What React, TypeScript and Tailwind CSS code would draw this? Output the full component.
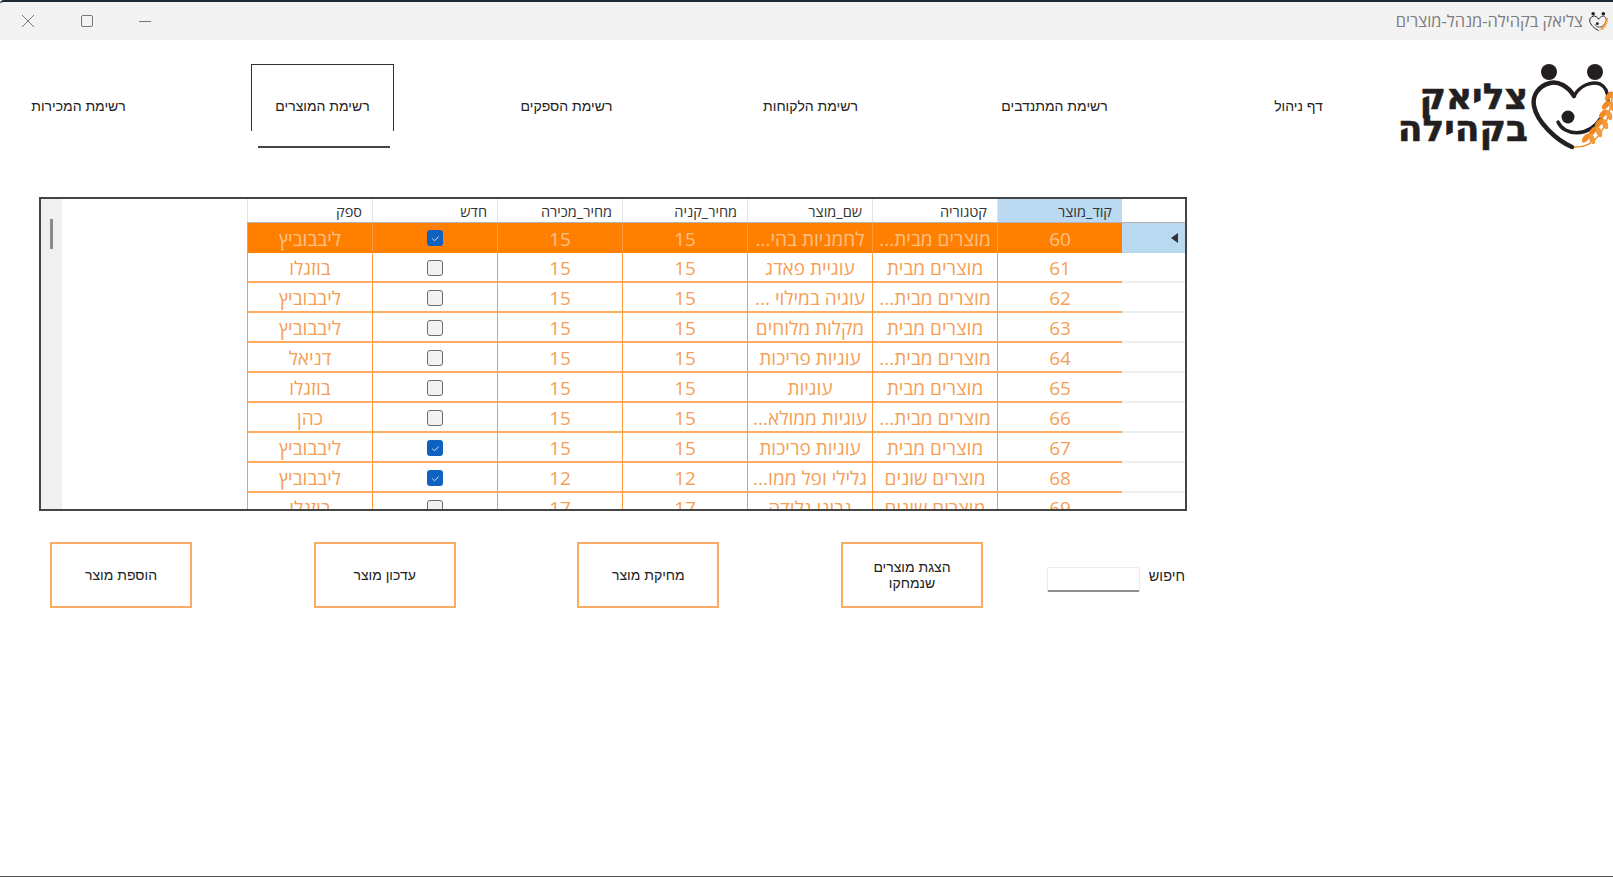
const navItems = ["רשימת המכירות", "רשימת המוצרים", "רשימת הספקים", "רשימת הלקוחות", "רשימת המתנדבים", "דף ניהול"];

const headers = ["קוד_מוצר", "קטגוריה", "שם_מוצר", "מחיר_קניה", "מחיר_מכירה", "חדש", "ספק"];

const rows = [
  { code: 60, cat: "מוצרים מבית...", name: "לחמניות בהי...", buy: 15, sell: 15, isNew: true, vendor: "ליבבוביץ" },
  { code: 61, cat: "מוצרים מבית", name: "עוגיית פאדג", buy: 15, sell: 15, isNew: false, vendor: "בוזגלו" },
  { code: 62, cat: "מוצרים מבית...", name: "עוגיה במילוי ...", buy: 15, sell: 15, isNew: false, vendor: "ליבבוביץ" },
  { code: 63, cat: "מוצרים מבית", name: "מקלות מלוחים", buy: 15, sell: 15, isNew: false, vendor: "ליבבוביץ" },
  { code: 64, cat: "מוצרים מבית...", name: "עוגיות פריכות", buy: 15, sell: 15, isNew: false, vendor: "דניאל" },
  { code: 65, cat: "מוצרים מבית", name: "עוגיות", buy: 15, sell: 15, isNew: false, vendor: "בוזגלו" },
  { code: 66, cat: "מוצרים מבית...", name: "עוגיות ממולא...", buy: 15, sell: 15, isNew: false, vendor: "כהן" },
  { code: 67, cat: "מוצרים מבית", name: "עוגיות פריכות", buy: 15, sell: 15, isNew: true, vendor: "ליבבוביץ" },
  { code: 68, cat: "מוצרים שונים", name: "גלילי ופל ממו...", buy: 12, sell: 12, isNew: true, vendor: "ליבבוביץ" },
  { code: 69, cat: "מוצרים שונים", name: "גבינו גלודה", buy: 17, sell: 17, isNew: false, vendor: "בוזגלו" },
];

const buttons = ["הוספת מוצר", "עדכון מוצר", "מחיקת מוצר"];

function LogoMark({ className }: { className: string }) {
  const grains = [
    [84, 36], [81, 45], [78, 54], [74, 63], [68, 71], [61, 78],
  ];
  return (
    <svg viewBox="0 0 86 90" className={className} fill="none">
      <circle cx="21" cy="12" r="8" fill="#231f20" />
      <circle cx="67" cy="12" r="8" fill="#231f20" />
      <circle cx="40" cy="57" r="6.5" fill="#231f20" />
      <path d="M46 36C40 26 30 21 22 23C10 26 4 36 6 46C9 62 28 80 44 87" stroke="#231f20" strokeWidth="4.5" strokeLinecap="round" />
      <path d="M46 36C52 25 64 21 72 24C78 27 80 33 80 40" stroke="#231f20" strokeWidth="3.5" strokeLinecap="round" />
      <path d="M30 62C36 76 60 78 73 58" stroke="#231f20" strokeWidth="3.5" strokeLinecap="round" />
      <path d="M46 87C66 88 80 72 85 32" stroke="#f08a24" strokeWidth="1.5" />
      {grains.map(([x, y], i) => (
        <g key={i}>
          <ellipse cx={x - 3} cy={y} rx="2.8" ry="5.5" fill="#f08a24" transform={`rotate(40 ${x - 3} ${y})`} />
          <ellipse cx={x + 3} cy={y + 1} rx="2.8" ry="5.5" fill="#f29a3c" transform={`rotate(-20 ${x + 3} ${y + 1})`} />
        </g>
      ))}
    </svg>
  );
}

function Checkbox({ checked }: { checked: boolean }) {
  if (checked) {
    return (
      <div className="w-4 h-4 rounded-[3px] bg-[#0f62c0] flex items-center justify-center">
        <svg viewBox="0 0 10 10" className="w-[9px] h-[9px]" fill="none">
          <path d="M1.5 5.2L4 7.5L8.5 2.8" stroke="#d8e6f7" strokeWidth="1.1" />
        </svg>
      </div>
    );
  }
  return <div className="w-4 h-4 rounded-[3px] bg-[#f2f2f2] border-[1.5px] border-[#6b6b6b]" />;
}

export default function App() {
  return (
    <div className="w-[1613px] h-[877px] overflow-hidden bg-white flex flex-col border-b border-[#555] font-['Liberation_Sans',sans-serif]">
      {/* title bar */}
      <div className="h-[40px] shrink-0 bg-[#f3f3f3] border-t-2 border-[#1f2a33] rounded-tl-[4px] flex items-center justify-between">
        <div className="flex items-center ml-[21px] text-[#777]">
          <svg viewBox="0 0 14 14" className="w-[14px] h-[14px]" fill="none">
            <path d="M1 1L13 13M13 1L1 13" stroke="#777" strokeWidth="1" />
          </svg>
          <div className="ml-[46px] w-[12px] h-[12px] rounded-[2px] border border-[#777]" />
          <div className="ml-[46px] w-[12px] h-px bg-[#777]" />
        </div>
        <div className="flex items-center gap-[5px] pr-[5px]">
          <span dir="rtl" className="text-[16.4px] text-[#7c7c7c] font-['Open_Sans',sans-serif]">צליאק בקהילה-מנהל-מוצרים</span>
          <LogoMark className="w-[20px] h-[20px]" />
        </div>
      </div>

      {/* nav and logo */}
      <div className="h-[157px] shrink-0 flex items-start pl-[7px]">
        <div className="flex gap-[101px] pt-[24px]">
          {navItems.map((item, i) => (
            <div key={item} className="w-[143px] flex flex-col">
              <div
                dir="rtl"
                className={`h-[67px] pt-[17px] flex items-center justify-center text-[14px] text-[#222] ${
                  i === 1 ? "border-t-[1.5px] border-x-[1.5px] border-[#333]" : ""
                }`}
              >
                {item}
              </div>
              {i === 1 && <div className="mt-[15px] ml-[7px] mr-[4px] h-[1.5px] bg-[#444]" />}
            </div>
          ))}
        </div>
        <div className="ml-[30px] pt-[20px] flex items-start shrink-0">
          <div dir="rtl" className="w-[128px] mt-[21px] text-[#231f20] font-['DejaVu_Sans',sans-serif] font-bold text-[36px] leading-[32px] text-right [-webkit-text-stroke:0.6px_#231f20]">
            <div>צליאק</div>
            <div>בקהילה</div>
          </div>
          <LogoMark className="w-[86px] h-[90px] shrink-0" />
        </div>
      </div>

      {/* products grid */}
      <div className="ml-[39px] w-[1148px] h-[314px] shrink-0 border-2 border-[#444] flex overflow-hidden font-['Open_Sans',sans-serif]">
        <div className="w-[21px] shrink-0 bg-[#f0f0f0] pt-[20px] flex justify-center">
          <div className="w-[3px] h-[30px] bg-[#8a8a8a]" />
        </div>
        <div className="w-[185px] shrink-0" />
        <div dir="rtl" className="w-[938px] shrink-0 flex flex-col">
          <div className="h-[24px] shrink-0 flex border-b border-[#b5b5b5]">
            <div className="w-[63px] shrink-0" />
            {headers.map((h, i) => (
              <div
                key={h}
                className={`w-[125px] shrink-0 pr-[10px] pt-[2px] flex items-center text-[14.5px] text-[#333] border-l border-[#e3e3e3] ${
                  i === 0 ? "bg-[#bbdaf2]" : ""
                }`}
              >
                {h}
              </div>
            ))}
          </div>
          {rows.map((r, i) => {
            const selected = i === 0;
            const cell = `w-[125px] shrink-0 pt-[2px] flex items-center justify-center border-l border-[#ff9a3c] ${
              selected ? "" : "border-b-2 border-b-[#ffac62]"
            }`;
            return (
              <div
                key={r.code}
                className={`h-[30px] shrink-0 flex text-[19px] ${selected ? "text-[#fbc08a]" : "text-[#f59f56]"}`}
              >
                <div className={`w-[63px] shrink-0 flex items-center pr-[7px] ${selected ? "bg-[#b9d9f0]" : "border-b-2 border-[#eeeeee]"}`}>
                  {selected && <div className="w-0 h-0 border-y-[5px] border-y-transparent border-r-[7px] border-r-[#333]" />}
                </div>
                <div className={`flex ${selected ? "bg-[#ff8000]" : ""}`}>
                  <div className={cell}>{r.code}</div>
                  <div className={cell}>{r.cat}</div>
                  <div className={cell}>{r.name}</div>
                  <div className={cell}>{r.buy}</div>
                  <div className={cell}>{r.sell}</div>
                  <div className={cell}>
                    <div className={selected ? "-mt-[2px]" : ""}>
                      <Checkbox checked={r.isNew} />
                    </div>
                  </div>
                  <div className={cell}>{r.vendor}</div>
                </div>
              </div>
            );
          })}
        </div>
      </div>

      {/* actions */}
      <div className="mt-[31px] ml-[50px] w-[1135px] h-[66px] shrink-0 flex items-center text-[14px] text-[#222]">
        <div className="flex gap-[121.67px]">
          {buttons.map((b) => (
            <div key={b} dir="rtl" className="w-[142px] h-[66px] border-2 border-[#f8ab62] flex items-center justify-center">
              {b}
            </div>
          ))}
          <div dir="rtl" className="w-[142px] h-[66px] border-2 border-[#f8ab62] flex items-center justify-center text-center leading-[16.5px]">
            הצגת מוצרים<br />שנמחקו
          </div>
        </div>
        <div className="ml-[64px] mt-[9px] w-[93px] h-[25px] bg-white border border-[#ececec] border-b-2 border-b-[#8f8f8f] rounded-[2px]" />
        <div dir="rtl" className="ml-auto mt-[4px] text-[14.5px]">חיפוש</div>
      </div>
    </div>
  );
}
